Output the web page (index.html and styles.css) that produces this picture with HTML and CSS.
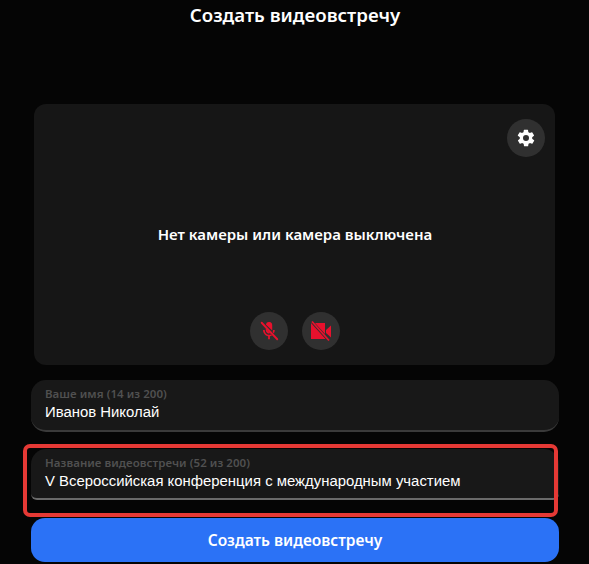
FILE: index.html
```html
<!DOCTYPE html>
<html lang="ru">
<head>
<meta charset="utf-8">
<title>Создать видеовстречу</title>
<link rel="stylesheet" href="styles.css">
</head>
<body>
<main class="page">
  <h1 class="title">Создать видеовстречу</h1>
  <section class="preview">
    <button class="round gear" type="button" aria-label="Настройки">
      <svg viewBox="0 0 24 24" width="20" height="20"><path fill="#fff" fill-rule="evenodd" d="M19.4 13a7.6 7.6 0 0 0 0-2l2.1-1.600a.5.5 0 0 0 .1-.6l-2-3.500a.5.5 0 0 0-.6-.2l-2.500 1a7.300 7.300 0 0 0-1.700-1l-.4-2.700a.5.5 0 0 0-.5-.4h-4a.5.5 0 0 0-.5.4l-.4 2.700a7.300 7.300 0 0 0-1.700 1l-2.500-1a.5.5 0 0 0-.6.2l-2 3.500a.5.5 0 0 0 .1.6L4.600 11a7.600 7.600 0 0 0 0 2l-2.100 1.600a.5.5 0 0 0-.1.6l2 3.500c.1.2.4.3.6.2l2.500-1a7.300 7.300 0 0 0 1.700 1l.4 2.700c0 .2.3.4.5.4h4c.2 0 .5-.2.5-.4l.4-2.700a7.300 7.300 0 0 0 1.700-1l2.500 1c.2.1.5 0 .6-.2l2-3.500a.5.5 0 0 0-.1-.6zM12 15.600a3.600 3.600 0 1 1 0-7.200 3.600 3.600 0 0 1 0 7.200z"/></svg>
    </button>
    <p class="nocam">Нет камеры или камера выключена</p>
    <div class="controls">
      <button class="round" type="button" aria-label="Микрофон выключен">
        <svg viewBox="0 0 24 24" width="22" height="22"><path fill="#e8112d" d="M15.500 11.400V5.800a3.500 3.500 0 0 0-6.900-.9zM8.500 9v2.200a3.500 3.500 0 0 0 5 3.100zM18.300 11h-1.800c0 .8-.2 1.500-.5 2.200l1.300 1.400c.6-1.100 1-2.300 1-3.600zM7.300 11H5.500c0 3.400 2.500 6.300 5.500 6.800V21h2v-3.200c.8-.1 1.600-.4 2.300-.8L14 15.700c-.6.300-1.300.5-2 .5-2.600 0-4.700-2.200-4.700-5.200z"/><path stroke="#e8112d" stroke-width="2" stroke-linecap="round" d="M4 3l17 18"/></svg>
      </button>
      <button class="round" type="button" aria-label="Камера выключена">
        <svg viewBox="0 0 24 24" width="24" height="24"><path fill="#e8112d" d="M2 4v16h14.500zM6 4l10 11V4zM17 11l5-4.500v12L17 14z"/><path stroke="#e8112d" stroke-width="1.800" d="M3 2.500 20 21.500"/></svg>
      </button>
    </div>
  </section>
  <div class="field first">
    <span class="label">Ваше имя (14 из 200)</span>
    <span class="value">Иванов Николай</span>
  </div>
  <div class="field second">
    <span class="label">Название видеовстречи (52 из 200)</span>
    <span class="value">V Всероссийская конференция с международным участием</span>
    <span class="highlight"></span>
  </div>
  <button class="submit" type="button">Создать видеовстречу</button>
</main>
</body>
</html>
```
FILE: styles.css
```css
* { box-sizing: border-box; }
html, body { margin: 0; height: 100%; }
body {
  background: #050505;
  color: #fff;
  overflow: hidden;
  font-family: "Liberation Sans", Arial, sans-serif;
}
.page {
  width: 589px;
  height: 564px;
  padding: 0 30px 0 31px;
  display: flex;
  flex-direction: column;
}
.title {
  margin: 3px 0 0;
  height: 24px;
  font: 600 18.700px/24px "Noto Sans", sans-serif;
  text-align: center;
}
.preview {
  position: relative;
  margin: 77px 4px 0 3px;
  height: 261px;
  background: #161616;
  border-radius: 12px;
  display: flex;
  flex-direction: column;
  align-items: center;
}
.nocam {
  margin: 120px 0 0 1px;
  font: 600 15px/20px "Noto Sans", sans-serif;
  height: 20px;
}
.round {
  width: 38px;
  height: 38px;
  padding: 0;
  border: 0;
  border-radius: 50%;
  background: #303030;
  display: flex;
  align-items: center;
  justify-content: center;
}
.gear { position: absolute; top: 15px; right: 10px; }
.controls {
  margin-top: 68px;
  display: flex;
  gap: 14px;
  margin-left: 1px;
}
.field {
  position: relative;
  height: 52px;
  padding: 7px 14px 0;
  background: #181818;
  border-bottom: 2px solid #3a3a3a;
  border-radius: 15px;
  display: flex;
  flex-direction: column;
}
.first { margin-top: 15px; }
.second { margin-top: 17px; border-bottom-color: #6a6a6a; border-radius: 15px 15px 6px 6px; height: 51px; }
.label {
  font: 600 11.500px/14px "Noto Sans", sans-serif;
  letter-spacing: 0.05px;
  color: #505050;
}
.value {
  font-size: 14.900px;
  line-height: 20px;
  margin-top: 1px;
}
.highlight {
  position: absolute;
  left: -8px;
  top: -5px;
  width: 535px;
  height: 73px;
  border: 4px solid #e53935;
  border-radius: 7px;
  pointer-events: none;
}
.submit {
  margin-top: 18px;
  height: 44px;
  border: 0;
  border-radius: 14px;
  background: #2b72f6;
  color: #fff;
  font: 600 15.500px/20px "Noto Sans", sans-serif;
}
```
